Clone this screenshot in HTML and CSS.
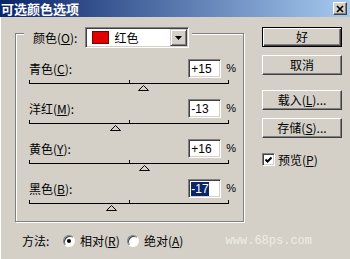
FILE: index.html
```html
<!DOCTYPE html>
<html>
<head>
  <title>可选颜色选项</title>
  <link rel="stylesheet" href="styles.css">
</head>
<body>
  <div class="window">
    <!-- Title bar -->
    <div class="titlebar">
      <span class="title">可选颜色选项</span>
      <span class="close-btn">
        <svg width="8" height="8" viewBox="0 0 8 8"><path d="M1 1L7 7M7 1L1 7" stroke="#000" stroke-width="1.7"/></svg>
      </span>
    </div>

    <div class="content">
      <div class="main">
        <!-- Colour group box -->
        <div class="group">
          <div class="group-head">
            <span>颜色(<u>O</u>):</span>
            <div class="select">
              <span class="swatch"></span>
              <span class="select-text">红色</span>
              <span class="arrow-btn">
                <svg width="7" height="4" viewBox="0 0 7 4"><polygon points="0,0 7,0 3.5,4" fill="#000"/></svg>
              </span>
            </div>
          </div>

          <div class="rows">
            <div class="row">
              <div class="row-top">
                <span>青色(<u>C</u>):</span>
                <div class="value"><span class="input">+15</span><span class="pct">%</span></div>
              </div>
              <div class="slider">
                <div class="track"><i></i><i></i><i></i></div>
                <svg class="thumb" style="margin-left: 109px" width="11" height="6" viewBox="0 0 11 6"><polygon points="5.5,0.5 10.5,5.5 0.5,5.5" fill="#d4d0c8" stroke="#000"/></svg>
              </div>
            </div>

            <div class="row">
              <div class="row-top">
                <span>洋红(<u>M</u>):</span>
                <div class="value"><span class="input">-13</span><span class="pct">%</span></div>
              </div>
              <div class="slider">
                <div class="track"><i></i><i></i><i></i></div>
                <svg class="thumb" style="margin-left: 81px" width="11" height="6" viewBox="0 0 11 6"><polygon points="5.5,0.5 10.5,5.5 0.5,5.5" fill="#d4d0c8" stroke="#000"/></svg>
              </div>
            </div>

            <div class="row">
              <div class="row-top">
                <span>黄色(<u>Y</u>):</span>
                <div class="value"><span class="input">+16</span><span class="pct">%</span></div>
              </div>
              <div class="slider">
                <div class="track"><i></i><i></i><i></i></div>
                <svg class="thumb" style="margin-left: 110px" width="11" height="6" viewBox="0 0 11 6"><polygon points="5.5,0.5 10.5,5.5 0.5,5.5" fill="#d4d0c8" stroke="#000"/></svg>
              </div>
            </div>

            <div class="row">
              <div class="row-top">
                <span>黑色(<u>B</u>):</span>
                <div class="value"><span class="input"><span class="selected">-17</span></span><span class="pct">%</span></div>
              </div>
              <div class="slider">
                <div class="track"><i></i><i></i><i></i></div>
                <svg class="thumb" style="margin-left: 77px" width="11" height="6" viewBox="0 0 11 6"><polygon points="5.5,0.5 10.5,5.5 0.5,5.5" fill="#d4d0c8" stroke="#000"/></svg>
              </div>
            </div>
          </div>
        </div>

        <!-- Buttons -->
        <div class="buttons">
          <button class="btn default">好</button>
          <button class="btn">取消</button>
          <button class="btn load">载入(<u>L</u>)...</button>
          <button class="btn">存储(<u>S</u>)...</button>
          <div class="check-row">
            <span class="checkbox">
              <svg width="7" height="7" viewBox="0 0 7 7"><path d="M0.5 3.5L2.5 5.5L6.5 1.5" stroke="#000" stroke-width="2" fill="none"/></svg>
            </span>
            <span>预览(<u>P</u>)</span>
          </div>
        </div>
      </div>

      <!-- Method -->
      <div class="method">
        <span class="method-label">方法:</span>
        <span class="radio checked"></span>
        <span class="opt-text">相对(<u>R</u>)</span>
        <span class="radio"></span>
        <span class="opt-text">绝对(<u>A</u>)</span>
        <span class="watermark">www.68ps.com</span>
      </div>
    </div>
  </div>
</body>
</html>
```

FILE: styles.css
```css
/* Classic dialog look */
* {
  box-sizing: border-box;
}

body {
  margin: 0;
  background: #d4d0c8;
  font-family: "Noto Sans CJK SC", "Liberation Sans", sans-serif;
  font-size: 12px;
  line-height: 1;
  color: #000;
}

u {
  text-decoration: underline;
}

.window {
  width: 350px;
  height: 259px;
  overflow: hidden;
}

/* Title bar */
.titlebar {
  height: 17px;
  display: flex;
  align-items: center;
  justify-content: space-between;
  padding: 0 3px 0 1px;
  background: linear-gradient(to right, #0a246a, #a6caf0);
}

.title {
  color: #fff;
  font-weight: bold;
  font-size: 13px;
  line-height: 1;
}

.close-btn {
  width: 14px;
  height: 13px;
  display: flex;
  align-items: center;
  justify-content: center;
  background: #d4d0c8;
  border: 1px solid;
  border-color: #fff #404040 #404040 #fff;
  box-shadow: inset -1px -1px #808080;
}

.content {
  height: 242px;
  box-shadow: inset 1px 0 #fff;
}

.main {
  display: flex;
  padding-left: 15px;
}

/* Etched group box */
.group {
  width: 229px;
  margin-top: 16px;
  padding-bottom: 10px;
  border: 1px solid #808080;
  box-shadow: inset 1px 1px #fff, 1px 1px #fff;
}

.group-head {
  display: flex;
  align-items: center;
  gap: 8px;
  width: fit-content;
  height: 21px;
  margin: -7px 0 0 8px;
  padding: 0 3px 0 9px;
  background: #d4d0c8;
}

.select {
  width: 104px;
  height: 21px;
  display: flex;
  align-items: center;
  padding: 1px;
  background: #fff;
  border: 1px solid;
  border-color: #808080 #fff #fff #808080;
  box-shadow: inset 1px 1px #404040, inset -1px -1px #d4d0c8;
}

.swatch {
  width: 17px;
  height: 13px;
  margin-left: 5px;
  background: #e00000;
  border: 1px solid #7a0000;
}

.select-text {
  margin-left: 5px;
}

.arrow-btn {
  width: 17px;
  height: 17px;
  margin-left: auto;
  display: flex;
  align-items: center;
  justify-content: center;
  background: #d4d0c8;
  border: 1px solid;
  border-color: #d4d0c8 #404040 #404040 #d4d0c8;
  box-shadow: inset 1px 1px #fff, inset -1px -1px #808080;
}

/* Slider rows */
.rows {
  padding-top: 11px;
}

.row {
  width: 207px;
  margin: 0 0 8px 13px;
}

.row:last-child {
  margin-bottom: 0;
}

.row-top {
  height: 19px;
  display: flex;
  align-items: center;
  justify-content: space-between;
}

.value {
  display: flex;
  align-items: center;
  gap: 5px;
}

.input {
  width: 33px;
  height: 19px;
  padding: 3px 0 0 2px;
  background: #fff;
  border: 1px solid;
  border-color: #808080 #fff #fff #808080;
  box-shadow: inset 1px 1px #404040, inset -1px -1px #d4d0c8;
  font-family: "Liberation Sans", sans-serif;
  font-size: 12px;
  line-height: 13px;
}

.selected {
  background: #0a246a;
  color: #fff;
}

.pct {
  font-family: "Liberation Sans", sans-serif;
  font-size: 11px;
}

.slider {
  margin-top: 2px;
}

.track {
  width: 200px;
  height: 4px;
  display: flex;
  justify-content: space-between;
  border-bottom: 1px solid #000;
}

.track i {
  width: 1px;
  background: #000;
}

.thumb {
  display: block;
  margin-top: 1px;
}

/* Right-hand buttons */
.buttons {
  width: 80px;
  margin-left: 18px;
  padding-top: 10px;
  display: flex;
  flex-direction: column;
}

.btn {
  width: 80px;
  height: 20px;
  margin-top: 8px;
  padding: 0;
  display: flex;
  align-items: center;
  justify-content: center;
  background: #d4d0c8;
  border: 1px solid;
  border-color: #fff #404040 #404040 #fff;
  box-shadow: inset -1px -1px #808080;
  font: inherit;
  color: #000;
}

.btn.default {
  margin-top: 0;
  border-color: #000;
  box-shadow: inset 1px 1px #fff, inset -1px -1px #404040, inset -2px -2px #808080;
}

.btn.load {
  margin-top: 15px;
}

.check-row {
  margin-top: 15px;
  display: flex;
  align-items: center;
  gap: 3px;
}

.checkbox {
  width: 13px;
  height: 13px;
  display: flex;
  align-items: center;
  justify-content: center;
  background: #fff;
  border: 1px solid;
  border-color: #808080 #fff #fff #808080;
  box-shadow: inset 1px 1px #404040, inset -1px -1px #d4d0c8;
}

/* Method row */
.method {
  height: 16px;
  margin-top: 11px;
  padding-left: 22px;
  display: flex;
  align-items: center;
}

.method-label {
  width: 41px;
}

.radio {
  width: 12px;
  height: 12px;
  display: flex;
  align-items: center;
  justify-content: center;
  border-radius: 50%;
  background: #fff;
  border: 1px solid;
  border-color: #808080 #fff #fff #808080;
  box-shadow: inset 1px 1px #404040;
}

.radio.checked::after {
  content: "";
  width: 4px;
  height: 4px;
  border-radius: 50%;
  background: #000;
}

.opt-text {
  width: 52px;
  padding-left: 5px;
}

.watermark {
  margin-left: auto;
  margin-right: 38px;
  font-family: "Liberation Mono", monospace;
  font-size: 12px;
  color: #eeece6;
}
```
